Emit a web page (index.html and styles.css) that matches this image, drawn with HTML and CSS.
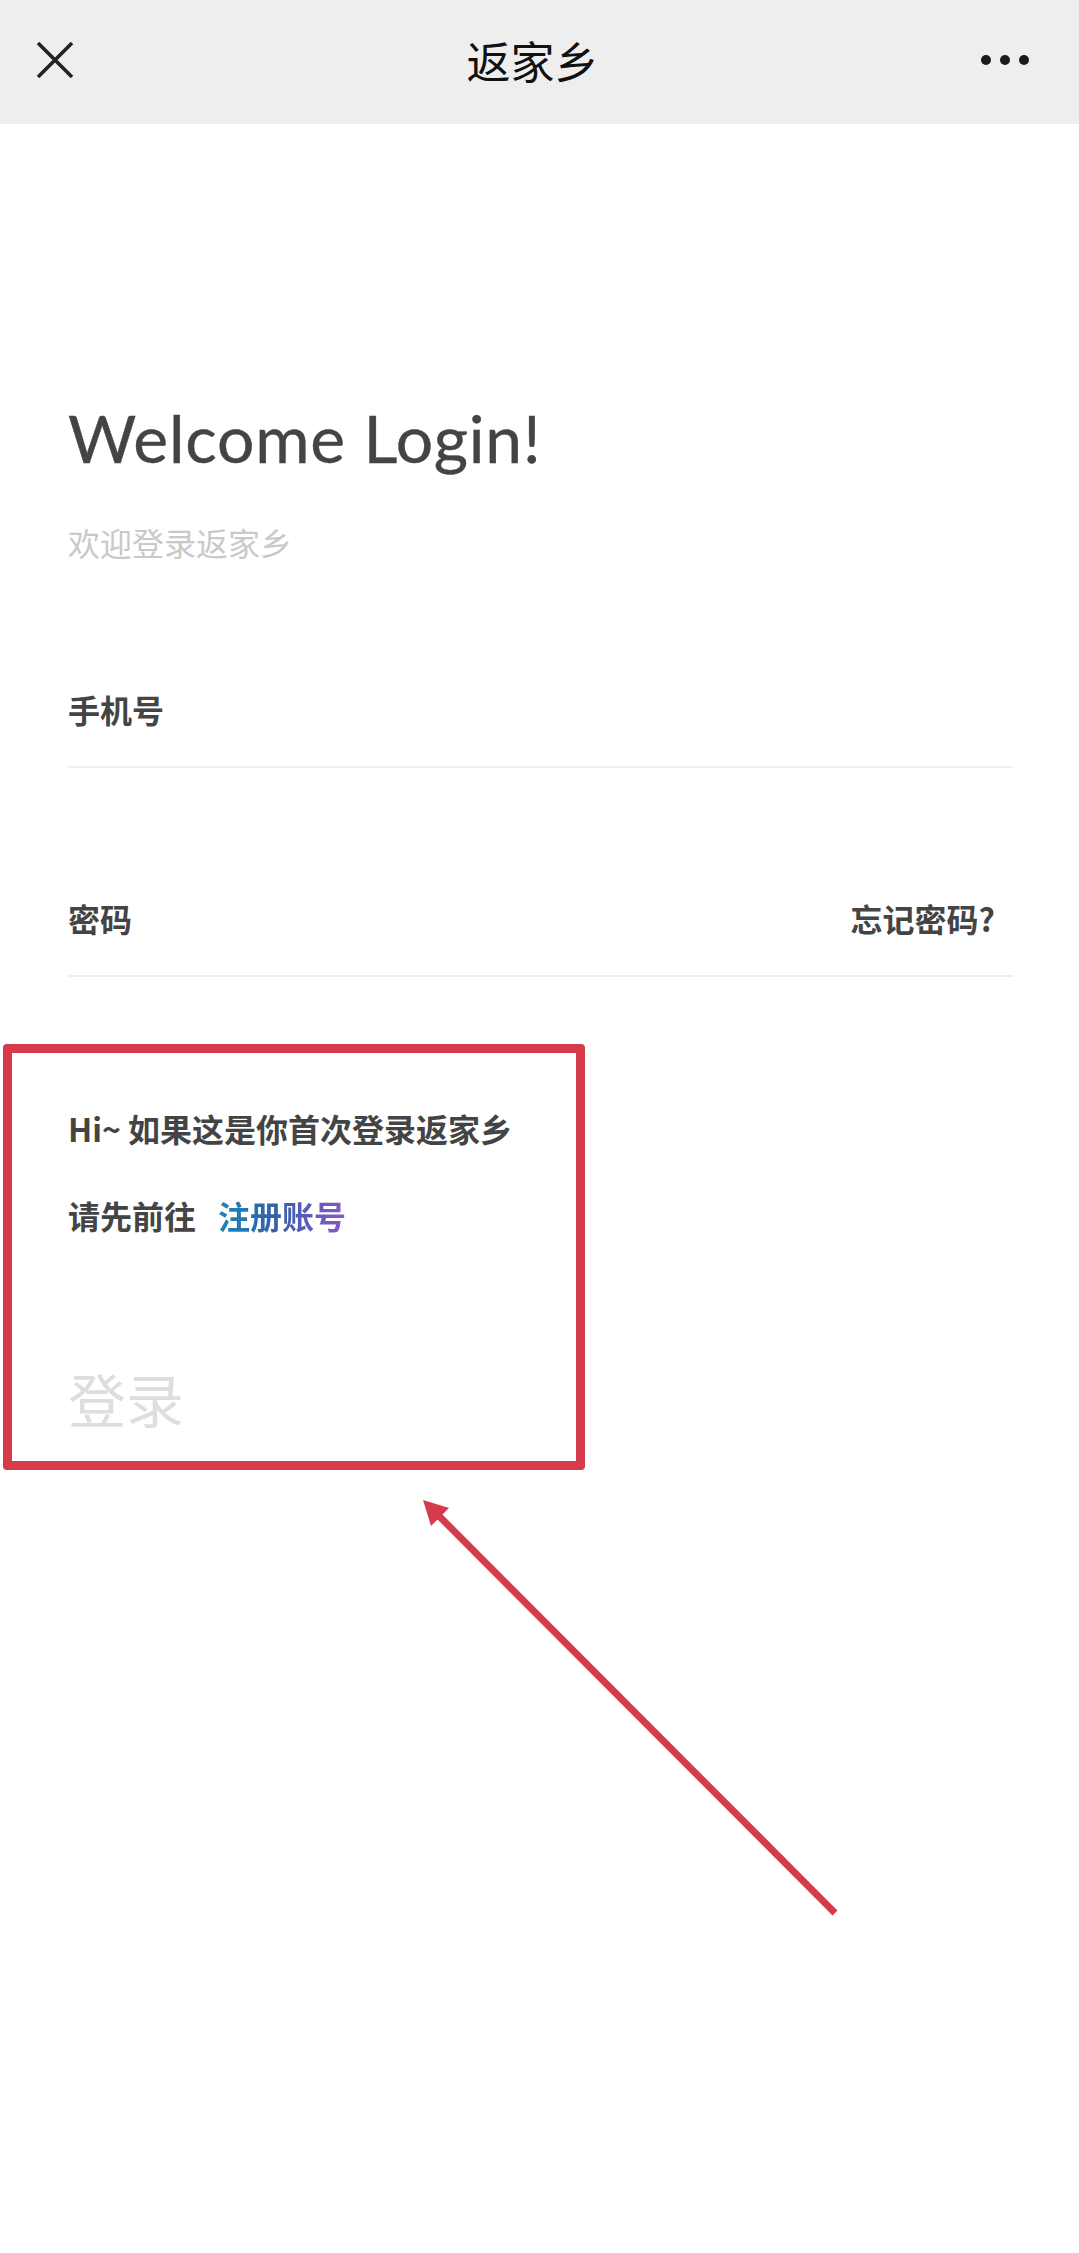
FILE: index.html
```html
<!DOCTYPE html>
<html lang="zh-CN">
<head>
<meta charset="utf-8">
<title>返家乡</title>
<link rel="stylesheet" href="styles.css">
</head>
<body>
<header class="nav">
  <div class="nav-close">
    <svg width="38" height="38" viewBox="0 0 38 38"><path d="M2 2 L36 36 M36 2 L2 36" stroke="#222" stroke-width="3.6" fill="none"/></svg>
  </div>
  <div class="nav-title">返家乡</div>
  <div class="nav-more"><span class="dot"></span><span class="dot"></span><span class="dot"></span></div>
</header>
<main class="login">
  <h1 class="welcome">Welcome Login!</h1>
  <p class="welcome-sub">欢迎登录返家乡</p>
  <div class="form">
    <div class="field"><span class="field-label">手机号</span></div>
    <div class="field"><span class="field-label">密码</span><a class="forgot">忘记密码?</a></div>
  </div>
  <div class="hint">
    <p class="hint-first">Hi~ 如果这是你首次登录返家乡</p>
    <p class="hint-second">请先前往<a class="register">注册账号</a></p>
  </div>
  <button class="submit">登录</button>
</main>
<div class="annot-box"></div>
<svg class="annot-arrow" width="1079" height="2253" viewBox="0 0 1079 2253">
  <line x1="438" y1="1515" x2="835" y2="1913" stroke="#d63b4b" stroke-width="7"/>
  <polygon points="423,1500 431,1526 449,1508" fill="#d63b4b"/>
</svg>
</body>
</html>
```
FILE: styles.css
```css
* { box-sizing: border-box; }
html, body { margin: 0; padding: 0; background: #ffffff; }
body {
  width: 1079px;
  min-height: 2253px;
  position: relative;
  font-family: "Noto Sans CJK SC", "Noto Sans", sans-serif;
}
.nav {
  height: 124px;
  background: #eeeeee;
  display: grid;
  grid-template-columns: 1fr auto 1fr;
  align-items: center;
  padding: 0 50px 5px 36px;
}
.nav-close { justify-self: start; display: flex; }
.nav-close svg { display: block; }
.nav-title {
  font-size: 44px;
  line-height: 44px;
  color: #111;
  font-weight: 400;
}
.nav-more {
  justify-self: end;
  display: flex;
  gap: 9px;
}
.dot {
  width: 10px;
  height: 10px;
  border-radius: 50%;
  background: #1a1a1a;
}
.login {
  padding: 0 66px 0 68px;
}
.welcome {
  margin: 274px 0 0;
  font-family: "Lato", "Open Sans", sans-serif;
  font-weight: 400;
  font-size: 66px;
  line-height: 80px;
  color: #444;
  letter-spacing: 0.75px;
  -webkit-text-stroke: 0.4px #444;
}
.welcome-sub {
  margin: 48px 0 0;
  font-size: 32px;
  line-height: 32px;
  color: #c9c9c9;
}
.field {
  display: flex;
  justify-content: space-between;
  align-items: center;
  padding: 134px 0 41px;
  border-bottom: 2px solid #efefef;
}
.field:first-child { padding-top: 135px; }
.field-label, .forgot {
  font-size: 32px;
  line-height: 32px;
  font-weight: 700;
  color: #444;
}
.forgot { padding-right: 18px; }
.hint { margin-top: 135px; }
.hint p { margin: 0; font-weight: 700; color: #444; font-size: 32px; line-height: 32px; }
.hint p.hint-second { margin-top: 55px; }
.register {
  margin-left: 22px;
  background: linear-gradient(90deg, #1b86b8 0%, #3460aa 45%, #8e55cc 100%);
  -webkit-background-clip: text;
  background-clip: text;
  color: transparent;
}
.submit {
  display: block;
  margin: 138px 0 0;
  padding: 0;
  border: 0;
  background: none;
  font-family: "Noto Sans CJK SC", sans-serif;
  font-size: 58px;
  line-height: 58px;
  color: #dedede;
}
.annot-box {
  position: absolute;
  left: 3px;
  top: 1044px;
  width: 582px;
  height: 426px;
  border: 9px solid #d63b4b;
  border-radius: 4px;
}
.annot-arrow {
  position: absolute;
  left: 0;
  top: 0;
  pointer-events: none;
}
```
